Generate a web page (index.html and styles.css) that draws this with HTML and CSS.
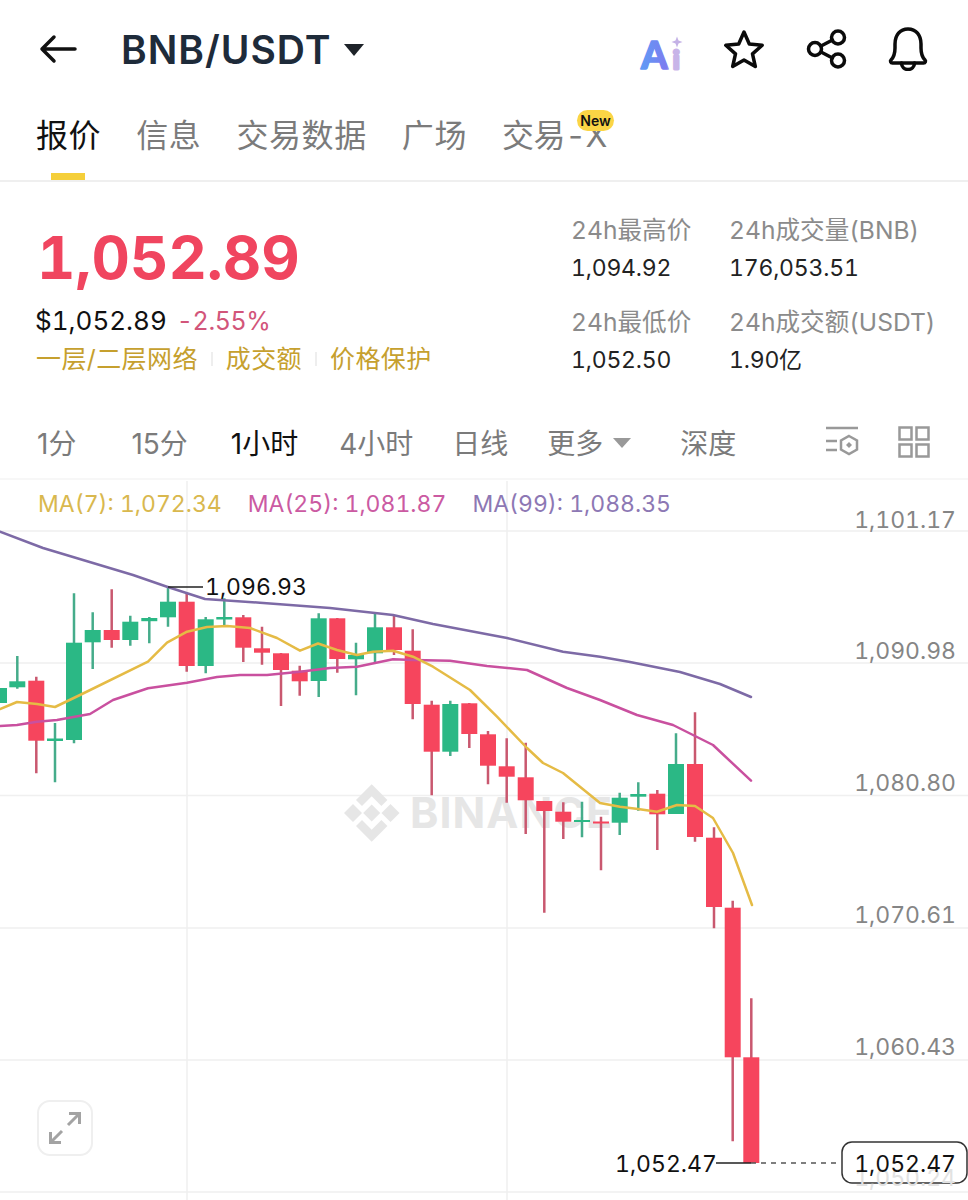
FILE: index.html
```html
<!DOCTYPE html>
<html lang="zh">
<head>
<meta charset="utf-8">
<title>BNB/USDT</title>
<link rel="stylesheet" href="styles.css">
</head>
<body>
<div class="page">
  <header class="topbar">
    <svg class="back" viewBox="0 0 38 30" width="38" height="30"><path d="M36 15H3M15 3 3 15l12 12"/></svg>
    <h1 class="pair">BNB/USDT</h1>
    <span class="caret"></span>
    <div class="actions">
      <svg class="ai" viewBox="0 0 44 38" width="44" height="38">
        <defs><linearGradient id="aig" gradientUnits="userSpaceOnUse" x1="0" x2="44" y1="0" y2="0"><stop offset="0" stop-color="#5e9cf5"/><stop offset=".6" stop-color="#7d7cf0"/><stop offset=".75" stop-color="#c8b4e8"/><stop offset="1" stop-color="#c8b4e8"/></linearGradient></defs>
        <text class="ai-text" x="1" y="39" fill="url(#aig)" stroke="url(#aig)">A<tspan class="ai-i" x="33">i</tspan></text>
        <path class="ai-star" d="M37 6.500l1.500 4 4 1.500-4 1.500-1.500 4-1.500-4-4-1.500 4-1.500z"/>
      </svg>
      <svg class="ic ic-star" viewBox="0 0 42 40" width="42" height="40"><path d="M21 3l5.300 12 12.900 1.300-9.700 8.600 2.800 12.600L21 31l-11.300 6.500 2.800-12.600-9.700-8.600L15.700 15z"/></svg>
      <svg class="ic ic-share" viewBox="0 0 42 40" width="42" height="40"><circle cx="32" cy="8.500" r="6.500"/><circle cx="32" cy="31.500" r="6.500"/><circle cx="9" cy="20" r="6.500"/><path d="M15 17l11.500-6M15 23l11.500 6"/></svg>
      <svg class="ic ic-bell" viewBox="0 0 42 44" width="42" height="44"><path d="M4 33c3-3 4-6 4-12v-4C8 8 13 2 21 2s13 6 13 15v4c0 6 1 9 4 12 1 1 .5 3-1.500 3H5.500C3.500 36 3 34 4 33z"/><path d="M14.500 36c0 4 3 6.500 6.500 6.500s6.500-2.500 6.500-6.500"/></svg>
    </div>
  </header>

  <nav class="tabs">
    <a class="tab tab-active">报价</a>
    <a class="tab">信息</a>
    <a class="tab">交易数据</a>
    <a class="tab">广场</a>
    <a class="tab tab-new">交易-X<span class="badge">New</span></a>
  </nav>

  <section class="summary">
    <div class="quote">
      <div class="price">1,052.89</div>
      <div class="sub"><span class="usd">$1,052.89</span><span class="pct">-2.55%</span></div>
      <div class="links"><span>一层/二层网络</span><i></i><span>成交额</span><i></i><span>价格保护</span></div>
    </div>
    <div class="stats">
      <div class="stat-col stat-col-a">
        <div class="stat"><div class="stat-label">24h最高价</div><div class="stat-value">1,094.92</div></div>
        <div class="stat"><div class="stat-label">24h最低价</div><div class="stat-value">1,052.50</div></div>
      </div>
      <div class="stat-col">
        <div class="stat"><div class="stat-label">24h成交量(BNB)</div><div class="stat-value">176,053.51</div></div>
        <div class="stat"><div class="stat-label">24h成交额(USDT)</div><div class="stat-value">1.90亿</div></div>
      </div>
    </div>
  </section>

  <div class="intervals">
    <span class="iv iv-1">1分</span>
    <span class="iv iv-2">15分</span>
    <span class="iv iv-3 iv-active">1小时</span>
    <span class="iv iv-4">4小时</span>
    <span class="iv iv-5">日线</span>
    <span class="iv iv-6">更多<b class="iv-caret"></b></span>
    <span class="iv iv-7">深度</span>
    <div class="iv-icons">
      <svg viewBox="0 0 34 32" width="34" height="32"><path d="M1 2h32M1 15h11M1 24h11"/><path d="M24 10l8 4.500v9L24 28l-8-4.500v-9z"/><path class="fill" d="M24 16l3 3-3 3-3-3z"/></svg>
      <svg viewBox="0 0 32 32" width="32" height="32"><rect x="1.500" y="1.500" width="12" height="12"/><rect x="18.500" y="1.500" width="12" height="12"/><rect x="1.500" y="18.500" width="12" height="12"/><rect x="18.500" y="18.500" width="12" height="12"/></svg>
    </div>
  </div>

  <section class="chart">
    <svg class="plot" viewBox="0 480 968 720" width="968" height="720">
      <g class="grid">
        <path d="M0 531H968M0 663H968M0 795.500H968M0 928H968M0 1060H968M0 1192H968M187 481V1200M507 481V1200"/>
      </g>
      <g class="mark">
        <path d="M371.700 804.500l8.500 8.500-8.500 8.500-8.500-8.500zM353 804l9 9-9 9-9-9zM390.500 804l9 9-9 9-9-9z"/>
        <path d="M356 800l15.700-15.700 15.700 15.700-6 6-9.700-9.700-9.700 9.700zM356 826l6-6 9.700 9.700 9.700-9.700 6 6-15.700 15.700z"/>
        <text x="410" y="828">BINANCE</text>
      </g>
      <g class="wick-g">
        <path d="M-1.500 679V712M17.300 656V688.700M55 723V782.300M74 593.300V743.300M92.700 612.300V669M130.300 615.700V645.700M149.300 617V643.300M168 586.700V626.700M205.700 617V673.300M224.300 598.300V626.700M318.700 613.300V697M356 642.700V695.300M375 613.300V663.300M450.300 700.700V756M582 801.700V837.300M619.700 792.700V835M638.300 782.300V810.700M676 733.300V814"/>
      </g>
      <g class="wick-r">
        <path d="M36.300 676.700V773.300M111.700 589.300V647.700M186.700 594V671.700M243.300 615V662M262 626.700V664.700M281 653V706M299.700 665.700V695.700M337.300 618V672.700M394 615V655M412.700 629.300V719.300M431.700 700.700V795.300M469.300 703V748M488 731V784.300M506.700 738.300V802.700M525.700 742.700V834M544.300 801V912.700M563.300 802.300V839M601 816.700V870.300M657.300 790V850M695 712.300V841.700M714 827.300V928.300M732.700 900.700V1141.300M751.300 998.300V1163"/>
      </g>
      <g class="body-g">
        <rect x="-9" y="688" width="16" height="15"/>
        <rect x="9.300" y="681.300" width="16" height="6"/>
        <rect x="47" y="738.500" width="16" height="2.500"/>
        <rect x="66" y="642.700" width="16" height="97.300"/>
        <rect x="84.700" y="630" width="16" height="12.300"/>
        <rect x="122.300" y="621.700" width="16" height="18.300"/>
        <rect x="141.300" y="618" width="16" height="3.200"/>
        <rect x="160" y="601.700" width="16" height="15.600"/>
        <rect x="197.700" y="619.300" width="16" height="46.700"/>
        <rect x="216.300" y="617" width="16" height="2.500"/>
        <rect x="310.700" y="618.300" width="16" height="62.700"/>
        <rect x="348" y="655" width="16" height="4.300"/>
        <rect x="367" y="627.300" width="16" height="26"/>
        <rect x="442.300" y="704" width="16" height="47.700"/>
        <rect x="574" y="820" width="16" height="2"/>
        <rect x="611.700" y="797.700" width="16" height="25"/>
        <rect x="630.300" y="794" width="16" height="2.700"/>
        <rect x="668" y="764" width="16" height="50"/>
      </g>
      <g class="body-r">
        <rect x="28.300" y="680.700" width="16" height="60"/>
        <rect x="103.700" y="630" width="16" height="10"/>
        <rect x="178.700" y="601.700" width="16" height="64.300"/>
        <rect x="235.300" y="617.300" width="16" height="30.400"/>
        <rect x="254" y="648.300" width="16" height="4.400"/>
        <rect x="273" y="653.300" width="16" height="16.700"/>
        <rect x="291.700" y="670.700" width="16" height="10.600"/>
        <rect x="329.300" y="618.300" width="16" height="40.700"/>
        <rect x="386" y="627.300" width="16" height="22.700"/>
        <rect x="404.700" y="650.700" width="16" height="53.300"/>
        <rect x="423.700" y="704.700" width="16" height="47"/>
        <rect x="461.300" y="703.300" width="16" height="30.700"/>
        <rect x="480" y="734.300" width="16" height="31.400"/>
        <rect x="498.700" y="766.300" width="16" height="10.400"/>
        <rect x="517.700" y="777.300" width="16" height="23"/>
        <rect x="536.300" y="801" width="16" height="10"/>
        <rect x="555.300" y="811.700" width="16" height="10"/>
        <rect x="593" y="821.500" width="16" height="2"/>
        <rect x="649.300" y="793.700" width="16" height="20.600"/>
        <rect x="687" y="764" width="16" height="73"/>
        <rect x="706" y="837.700" width="16" height="69.300"/>
        <rect x="724.700" y="907.700" width="16" height="149.600"/>
        <rect x="743.300" y="1057.300" width="16" height="105.700"/>
      </g>
      <polyline class="ma ma99" points="0,531.700 43,548 93,563 133,575 167,586.700 205,599 260,602.700 330,608 393,615 433,624 507,638 563,651.700 600,656.700 630,662 680,672 720,684 751,697"/>
      <polyline class="ma ma25" points="0,726 17,725 37,721.700 57,720 90,714 113,700 148,688.300 187,682.700 217,677 240,675 267,675 300,671.700 330,668 357,666.700 393,659.300 413,660 450,660.700 487,666 527,670 567,688 600,700 637,715 673,725 713,745 751,780.700"/>
      <polyline class="ma ma7" points="0,709 17,702 37,704 55,707 80,695 148,661.700 167,642.700 187,631.700 207,627 227,626 250,628 277,638 300,650.700 318,643.500 337,650 357,655 373,651.700 393,650.700 413,656.700 433,666.700 470,690 497,716.700 527,748 543,763 563,773 600,803 620,806.700 638,809 657,811.700 677,805 695,806 713,818 733,853 752,905"/>
      <g class="axis">
        <text x="956" y="528">1,101.17</text>
        <text x="956" y="659">1,090.98</text>
        <text x="956" y="791">1,080.80</text>
        <text x="956" y="923">1,070.61</text>
        <text x="956" y="1055">1,060.43</text>
      </g>
      <path class="lead" d="M168 587H203M716 1163H751"/>
      <path class="dash" d="M751 1163H841"/>
      <text class="note" x="205" y="595">1,096.93</text>
      <text class="note" x="615" y="1172">1,052.47</text>
      <rect class="last-box" x="842" y="1142" width="125" height="41" rx="10"/>
      <g class="axis">
        <text class="axis-ghost" x="956" y="1186">1,050.24</text>
      </g>
      <text class="note note-end" x="956" y="1172">1,052.47</text>
    </svg>
    <div class="legend">
      <span class="l7">MA(7): 1,072.34</span>
      <span class="l25">MA(25): 1,081.87</span>
      <span class="l99">MA(99): 1,088.35</span>
    </div>
    <button class="expand" type="button">
      <svg viewBox="0 0 36 36" width="36" height="36"><path d="M21 15l11-11M22 3.500h10.500V14M15 21L4 32M3.500 22v10.500H14"/></svg>
    </button>
  </section>
</div>
</body>
</html>
```
FILE: styles.css
```css
* { box-sizing: border-box; }
html, body { margin: 0; padding: 0; background: #fff; }
body { font-family: Inter, "Noto Sans CJK SC", sans-serif; font-variant-numeric: tabular-nums; color: #1e2329; }
.page { width: 968px; height: 1200px; overflow: hidden; }

.topbar { display: flex; align-items: center; height: 98px; padding: 0 39px 0 39px; }
.back { flex: none; fill: none; stroke: #111; stroke-width: 3.500; stroke-linecap: round; stroke-linejoin: round; }
.pair { margin: 0 0 0 44px; font-size: 39px; font-weight: 600; letter-spacing: 1px; color: #1e2b3a; line-height: 1; }
.caret { margin: 2px 0 0 12px; width: 0; height: 0; border-left: 10px solid transparent; border-right: 10px solid transparent; border-top: 12px solid #1e2329; }
.actions { margin-left: auto; display: flex; align-items: center; gap: 40px; }
.ai { margin-right: -1px; overflow: visible; }
.ai-text { font-family: Lato, sans-serif; font-weight: 900; font-size: 38px; stroke-width: 1.500; stroke-linejoin: round; }
.ai-i { font-size: 25px; stroke-width: 3; }
.ai-star { fill: #c4b2e6; }
.ic { fill: none; stroke: #0b0b0b; stroke-width: 3.500; stroke-linejoin: round; stroke-linecap: round; }
.ic-share { margin-left: 1px; margin-right: -1px; }

.tabs { display: flex; gap: 35px; height: 84px; padding: 0 0 0 36px; border-bottom: 2px solid #efefef; }
.tab { position: relative; font-size: 32px; letter-spacing: .6px; line-height: 76px; color: #7b7b7b; }
.tab-active { color: #111; }
.tab-active::after { content: ""; position: absolute; left: 15px; bottom: 0; width: 34px; height: 7px; background: #f5cf3a; }
.tab-new { letter-spacing: -.4px; }
.badge { position: absolute; left: 75px; top: 12px; width: 37px; height: 21px; border-radius: 11px; background: #fbd545; color: #111; font-size: 14px; font-weight: 600; letter-spacing: 0; line-height: 21px; text-align: center; }

.summary { display: flex; height: 228px; }
.quote { width: 572px; flex: none; padding: 40px 0 0 35px; }
.price { margin-left: 2px; font-size: 59.500px; font-weight: 700; line-height: 70px; color: #f0455f; }
.sub { display: flex; gap: 10px; margin-top: 11px; font-size: 26px; line-height: 36px; }
.usd { color: #111; }
.pct { color: #d2557a; font-size: 25px; letter-spacing: -.4px; }
.links { display: flex; align-items: center; margin: 2px 0 0 1px; font-size: 25px; letter-spacing: .4px; line-height: 36px; color: #c6a02e; }
.links i { width: 2px; height: 14px; margin: 0 13px; background: #eee; }
.stats { display: flex; }
.stat-col { display: flex; flex-direction: column; padding-top: 30px; }
.stat-col-a { width: 158px; margin-left: -1px; }
.stat { height: 92px; }
.stat-label { font-size: 24.600px; line-height: 36px; color: #8b8b8b; }
.stat-value { margin-top: 3px; font-size: 23px; letter-spacing: -.2px; line-height: 34px; color: #222; }

.intervals { display: flex; align-items: center; height: 70px; padding: 0 38px 4px 37px; border-bottom: 2px solid #f7f7f7; font-size: 28px; font-variant-numeric: normal; color: #7b7b7b; }
.iv { white-space: nowrap; }
.iv-2 { margin-left: 55px; }
.iv-3 { margin-left: 43px; color: #111; }
.iv-4 { margin-left: 41px; }
.iv-5 { margin-left: 39px; }
.iv-6 { margin-left: 39px; display: flex; align-items: center; }
.iv-7 { margin-left: 49px; }
.iv-caret { margin: 2px 0 0 10px; width: 0; height: 0; border-left: 9px solid transparent; border-right: 9px solid transparent; border-top: 10px solid #999; }
.iv-icons { margin-left: auto; display: flex; gap: 39px; align-items: center; }
.iv-icons svg { fill: none; stroke: #999; stroke-width: 2.500; }
.iv-icons .fill { fill: #999; stroke: none; }

.chart { position: relative; height: 720px; }
.plot { position: absolute; left: 0; top: 0; display: block; }
.grid path { stroke: #f0f0f0; stroke-width: 1.500; fill: none; }
.mark { fill: #e6e6e6; }
.mark text { font-size: 43px; font-weight: 700; letter-spacing: 1px; }
.wick-g path { stroke: #45ac8a; stroke-width: 2.500; fill: none; }
.wick-r path { stroke: #c9586f; stroke-width: 2.500; fill: none; }
.body-g { fill: #2bb885; }
.body-r { fill: #f6455d; }
.ma { fill: none; stroke-width: 2.500; stroke-linejoin: round; stroke-linecap: round; }
.ma99 { stroke: #7d6aa6; }
.ma25 { stroke: #c9509f; }
.ma7 { stroke: #e5bb45; }
.axis text { font-size: 23px; fill: #858585; text-anchor: end; }
.axis .axis-ghost { fill: #e2e2e2; }
.lead { stroke: #222; stroke-width: 1.500; fill: none; }
.dash { stroke: #555; stroke-width: 1.500; stroke-dasharray: 5 5; fill: none; }
.note { font-size: 23px; fill: #111; }
.note-end { text-anchor: end; }
.last-box { fill: #fff; stroke: #333; stroke-width: 1.500; }

.legend { position: absolute; left: 38px; top: 7px; display: flex; gap: 26px; font-size: 23px; line-height: 34px; }
.l7 { color: #d9b84e; }
.l25 { color: #cb5aa2; }
.l99 { color: #8d78b4; }

.expand { position: absolute; left: 37px; top: 620px; display: flex; align-items: center; justify-content: center; width: 56px; height: 56px; padding: 0; background: #fff; border: 2px solid #efefef; border-radius: 13px; }
.expand svg { fill: none; stroke: #a3a3a3; stroke-width: 3; }
```
